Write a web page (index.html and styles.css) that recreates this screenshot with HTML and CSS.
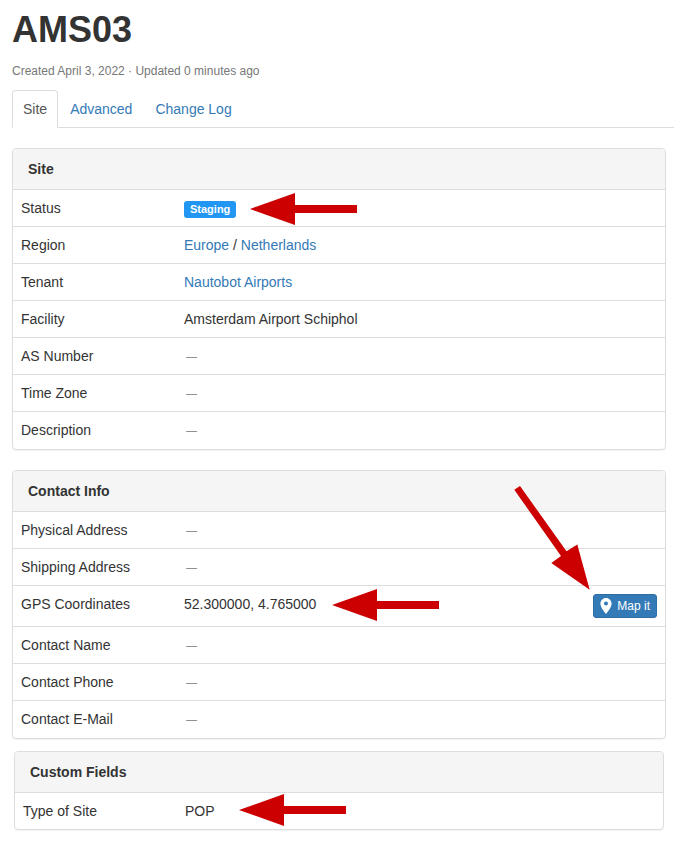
FILE: index.html
```html
<!DOCTYPE html>
<html lang="en">
<head>
<meta charset="utf-8">
<meta name="viewport" content="width=device-width, initial-scale=1">
<title>AMS03</title>
<link rel="stylesheet" href="styles.css">
</head>
<body>
<main class="page">
  <h1>AMS03</h1>
  <p class="meta">Created April 3, 2022 · Updated 0 minutes ago</p>
  <nav class="tabs">
    <a class="tab active" href="#site">Site</a>
    <a class="tab" href="#advanced">Advanced</a>
    <a class="tab" href="#changelog">Change Log</a>
  </nav>

  <section class="panel" id="site">
    <h2>Site</h2>
    <table>
      <tbody>
        <tr><th scope="row">Status</th><td><span class="label">Staging</span></td></tr>
        <tr><th scope="row">Region</th><td><a href="#europe">Europe</a> / <a href="#netherlands">Netherlands</a></td></tr>
        <tr><th scope="row">Tenant</th><td><a href="#tenant">Nautobot Airports</a></td></tr>
        <tr><th scope="row">Facility</th><td>Amsterdam Airport Schiphol</td></tr>
        <tr><th scope="row">AS Number</th><td class="empty">—</td></tr>
        <tr><th scope="row">Time Zone</th><td class="empty">—</td></tr>
        <tr><th scope="row">Description</th><td class="empty">—</td></tr>
      </tbody>
    </table>
  </section>

  <section class="panel">
    <h2>Contact Info</h2>
    <table>
      <tbody>
        <tr><th scope="row">Physical Address</th><td class="empty">—</td></tr>
        <tr><th scope="row">Shipping Address</th><td class="empty">—</td></tr>
        <tr><th scope="row">GPS Coordinates</th><td>
          <div class="coords">
            <span>52.300000, 4.765000</span>
            <a class="button" href="#map"><svg class="pin" viewBox="5 2 14 20" aria-hidden="true"><path fill="currentColor" fill-rule="evenodd" d="M12 2C8.13 2 5 5.13 5 9c0 5.25 7 13 7 13s7-7.75 7-13c0-3.87-3.13-7-7-7zm0 9.5a2.5 2.5 0 1 1 0-5 2.5 2.5 0 0 1 0 5z"/></svg>Map it</a>
          </div>
        </td></tr>
        <tr><th scope="row">Contact Name</th><td class="empty">—</td></tr>
        <tr><th scope="row">Contact Phone</th><td class="empty">—</td></tr>
        <tr><th scope="row">Contact E-Mail</th><td class="empty">—</td></tr>
      </tbody>
    </table>
  </section>

  <section class="panel custom">
    <h2>Custom Fields</h2>
    <table>
      <tbody>
        <tr><th scope="row">Type of Site</th><td>POP</td></tr>
      </tbody>
    </table>
  </section>

  <svg class="arrow arrow-status" viewBox="0 0 108 34" aria-hidden="true"><path d="M0 17 45 1v12h62v8H45v12z"/></svg>
  <svg class="arrow arrow-coords" viewBox="0 0 108 34" aria-hidden="true"><path d="M0 17 45 1v12h62v8H45v12z"/></svg>
  <svg class="arrow arrow-type" viewBox="0 0 108 34" aria-hidden="true"><path d="M0 17 45 1v12h62v8H45v12z"/></svg>
  <svg class="arrow arrow-map" viewBox="514 485 78 106" aria-hidden="true"><path d="M589.7 589.7 551.3 563 561 556 514.300 489.800 520 486 566.500 551.300 577.300 544.500z"/></svg>
</main>
</body>
</html>
```

FILE: styles.css
```css
* {
  box-sizing: border-box;
}

body {
  margin: 0;
  background: #fff;
  color: #333;
  font: 14px/20px "Liberation Sans", Arial, sans-serif;
}

a {
  color: #337ab7;
  text-decoration: none;
}

.page {
  position: relative;
  padding: 10px 16px 11px 12px;
}

h1 {
  margin: 0;
  font-size: 36px;
  line-height: 40px;
}

.meta {
  margin: 11px 0 9px;
  color: #777;
  font-size: 12px;
}

.tabs {
  display: flex;
  gap: 1px;
  margin: 0 -8px 20px 0;
  border-bottom: 1px solid #ddd;
}

.tab {
  margin-bottom: -1px;
  padding: 8px 10px;
  border: 1px solid transparent;
  border-radius: 4px 4px 0 0;
}

.tab.active {
  border-color: #ddd #ddd #fff;
  background: #fff;
  color: #555;
}

.panel {
  margin-bottom: 20px;
  border: 1px solid #ddd;
  border-radius: 4px;
  box-shadow: 0 1px 1px rgba(0, 0, 0, 0.05);
}

.panel h2 {
  margin: 0;
  padding: 10px 15px;
  border-radius: 3px 3px 0 0;
  background: #f5f5f5;
  font-size: 14px;
  line-height: 20px;
}

table {
  width: 100%;
  border-collapse: separate;
  border-spacing: 0;
  table-layout: fixed;
}

th,
td {
  padding: 8px;
  border-top: 1px solid #ddd;
  text-align: left;
  vertical-align: top;
}

th {
  width: 25%;
  font-weight: 400;
}

.panel:not(.custom) tr:last-child > * {
  padding-bottom: 9px;
}

.empty {
  padding-left: 10px;
  color: #777;
  font-size: 11px;
}

.label {
  display: inline-block;
  padding: 0 6px;
  border-radius: 3px;
  background: #2196f3;
  color: #fff;
  font-size: 11px;
  font-weight: 700;
  line-height: 17px;
}

.coords {
  display: flex;
  justify-content: space-between;
}

.button {
  display: flex;
  align-items: center;
  gap: 5px;
  height: 24px;
  padding: 0 6px;
  border: 1px solid #2e6da4;
  border-radius: 3px;
  background: #337ab7;
  color: #fff;
  font-size: 12px;
}

.pin {
  width: 12px;
  height: 16px;
}

.custom {
  margin: -8px 2px 0;
}

.arrow {
  position: absolute;
  width: 108px;
  height: 34px;
  fill: #c00;
}

.arrow-status {
  top: 192px;
  left: 250px;
}

.arrow-coords {
  top: 588px;
  left: 332px;
}

.arrow-type {
  top: 793px;
  left: 239px;
}

.arrow-map {
  top: 485px;
  left: 514px;
  width: 78px;
  height: 106px;
}
```
